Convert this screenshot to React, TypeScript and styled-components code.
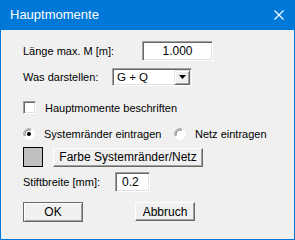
import styled, { createGlobalStyle } from 'styled-components';

const Global = createGlobalStyle`
  html, body {
    margin: 0;
    padding: 0;
    background: #ffffff;
  }
`;

const Window = styled.div`
  width: 295px;
  height: 240px;
  box-sizing: border-box;
  display: flex;
  flex-direction: column;
  background: #f0f0f0;
  border: 1px solid #0078d7;
  border-top: none;
  font-family: "Liberation Sans", Arial, sans-serif;
  font-size: 11px;
  color: #000000;
`;

const TitleBar = styled.div`
  height: 30px;
  margin: 0 -1px;
  padding: 0 11px 0 10px;
  display: flex;
  align-items: center;
  justify-content: space-between;
  background: #0078d7;
  color: #ffffff;
  font-size: 13px;
`;

const Title = styled.span`
  margin-top: -1px;
`;

const Body = styled.div`
  display: flex;
  flex-direction: column;
  padding: 11px 0 0 21px;
`;

const Row = styled.div<{ $h: number; $mt?: number }>`
  display: flex;
  align-items: center;
  height: ${(p) => p.$h}px;
  margin-top: ${(p) => p.$mt ?? 0}px;
`;

const Label = styled.span<{ $w?: number }>`
  display: inline-block;
  width: ${(p) => (p.$w ? `${p.$w}px` : 'auto')};
  padding-left: 1px;
  box-sizing: border-box;
  white-space: nowrap;
`;

const TextBox = styled.div<{ $w: number; $align?: string }>`
  width: ${(p) => p.$w}px;
  height: 20px;
  box-sizing: border-box;
  display: flex;
  align-items: center;
  justify-content: ${(p) => p.$align ?? 'center'};
  padding: 0 6px;
  background: #ffffff;
  border-top: 1px solid #a0a0a0;
  border-left: 1px solid #a0a0a0;
  border-right: 1px solid #ffffff;
  border-bottom: 1px solid #ffffff;
  box-shadow: inset 1px 1px 0 #696969, inset -1px -1px 0 #e3e3e3;
  font-size: 12px;
`;

const Select = styled.div`
  width: 80px;
  height: 18px;
  box-sizing: border-box;
  display: flex;
  align-items: center;
  justify-content: space-between;
  padding: 0 1px 0 4px;
  background: #ffffff;
  border-top: 1px solid #a0a0a0;
  border-left: 1px solid #a0a0a0;
  border-right: 1px solid #ffffff;
  border-bottom: 1px solid #ffffff;
  box-shadow: inset 1px 1px 0 #696969, inset -1px -1px 0 #e3e3e3;
  font-size: 11.5px;
`;

const ArrowButton = styled.div`
  width: 16px;
  height: 15px;
  box-sizing: border-box;
  display: flex;
  align-items: center;
  justify-content: center;
  background: #f0f0f0;
  border-top: 1px solid #e3e3e3;
  border-left: 1px solid #e3e3e3;
  border-right: 1px solid #696969;
  border-bottom: 1px solid #696969;
  box-shadow: inset 1px 1px 0 #ffffff, inset -1px -1px 0 #a0a0a0;
`;

const Check = styled.span`
  width: 13px;
  height: 13px;
  box-sizing: border-box;
  margin-left: 1px;
  margin-right: 8px;
  background: #ffffff;
  border-top: 1px solid #a0a0a0;
  border-left: 1px solid #a0a0a0;
  border-right: 1px solid #ffffff;
  border-bottom: 1px solid #ffffff;
  box-shadow: inset 1px 1px 0 #696969, inset -1px -1px 0 #e3e3e3;
`;

const RadioGroup = styled.label<{ $w?: number }>`
  display: flex;
  align-items: center;
  width: ${(p) => (p.$w ? `${p.$w}px` : 'auto')};
`;

const RadioMark = styled.svg`
  width: 12px;
  height: 12px;
  margin-left: 1px;
  margin-right: 9px;
  flex: none;
`;

const Swatch = styled.span`
  width: 20px;
  height: 20px;
  box-sizing: border-box;
  margin-left: 1px;
  margin-right: 10px;
  background: #c0c0c0;
  border: 1px solid #000000;
`;

const Button = styled.div<{ $w: number; $default?: boolean }>`
  width: ${(p) => p.$w}px;
  height: ${(p) => (p.$default ? 20 : 19)}px;
  box-sizing: border-box;
  display: flex;
  align-items: center;
  justify-content: center;
  background: #f0f0f0;
  font-size: 12px;
  border-top: 1px solid ${(p) => (p.$default ? '#696969' : '#ffffff')};
  border-left: 1px solid ${(p) => (p.$default ? '#696969' : '#ffffff')};
  border-right: 1px solid #696969;
  border-bottom: 1px solid #696969;
  box-shadow: ${(p) =>
    p.$default
      ? 'inset 1px 1px 0 #ffffff, inset -1px -1px 0 #a0a0a0'
      : 'inset -1px -1px 0 #a0a0a0'};
`;

const ButtonRow = styled.div`
  display: flex;
  gap: 52px;
  margin-top: 10px;
  padding-left: 1px;
`;

const Radio = ({ checked }: { checked?: boolean }) => (
  <RadioMark viewBox="0 0 12 12">
    <circle cx="6" cy="6" r="5.5" fill="#ffffff" />
    <path d="M1.2 8.2 A5.2 5.2 0 0 1 8.2 1.2" stroke="#a0a0a0" strokeWidth="1" fill="none" />
    <path d="M2.2 7.6 A4.2 4.2 0 0 1 7.6 2.2" stroke="#696969" strokeWidth="1" fill="none" />
    <path d="M3.8 10.8 A5.2 5.2 0 0 0 10.8 3.8" stroke="#ffffff" strokeWidth="1" fill="none" />
    {checked && <circle cx="6" cy="6" r="2" fill="#000000" />}
  </RadioMark>
);

export default function App() {
  return (
    <>
      <Global />
      <Window>
        <TitleBar>
          <Title>Hauptmomente</Title>
          <svg width="10" height="10" viewBox="0 0 10 10">
            <path d="M0.5 0.5 L9.5 9.5 M9.5 0.5 L0.5 9.5" stroke="#ffffff" strokeWidth="1.1" />
          </svg>
        </TitleBar>
        <Body>
          <Row $h={20}>
            <Label $w={120}>Länge max. M [m]:</Label>
            <TextBox $w={71}>1.000</TextBox>
          </Row>
          <Row $h={18} $mt={7}>
            <Label $w={90}>Was darstellen:</Label>
            <Select>
              <span>G + Q</span>
              <ArrowButton>
                <svg width="7" height="4" viewBox="0 0 7 4">
                  <path d="M0 0 H7 L3.5 4 Z" fill="#000000" />
                </svg>
              </ArrowButton>
            </Select>
          </Row>
          <Row $h={13} $mt={15}>
            <Check />
            <Label>Hauptmomente beschriften</Label>
          </Row>
          <Row $h={13} $mt={13}>
            <RadioGroup $w={151}>
              <Radio checked />
              <span>Systemränder eintragen</span>
            </RadioGroup>
            <RadioGroup>
              <Radio />
              <span>Netz eintragen</span>
            </RadioGroup>
          </Row>
          <Row $h={20} $mt={7}>
            <Swatch />
            <Button $w={150}>Farbe Systemränder/Netz</Button>
          </Row>
          <Row $h={20} $mt={5}>
            <Label $w={93}>Stiftbreite [mm]:</Label>
            <TextBox $w={35} $align="flex-start">0.2</TextBox>
          </Row>
          <ButtonRow>
            <Button $w={60} $default>OK</Button>
            <Button $w={60}>Abbruch</Button>
          </ButtonRow>
        </Body>
      </Window>
    </>
  );
}
